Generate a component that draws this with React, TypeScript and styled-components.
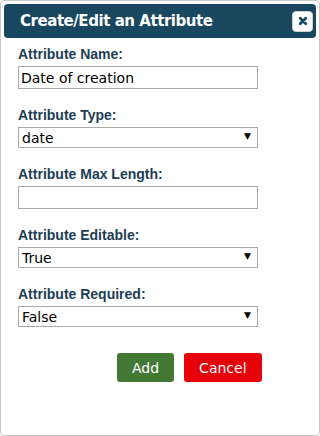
import React from "react";
import styled, { createGlobalStyle } from "styled-components";

const GlobalStyle = createGlobalStyle`
  html, body {
    margin: 0;
    padding: 0;
    background: #ffffff;
  }
`;

const Dialog = styled.div`
  box-sizing: border-box;
  width: 320px;
  height: 436px;
  border: 1px solid #c9c9c9;
  border-radius: 4px;
  padding: 3px;
  background: #ffffff;
  font-family: "DejaVu Sans", Verdana, sans-serif;
`;

const Header = styled.div`
  display: flex;
  align-items: center;
  justify-content: space-between;
  height: 34px;
  padding: 0 3px 0 16px;
  background: #19475f;
  border-radius: 4px;
  color: #ffffff;
`;

const Title = styled.h1`
  margin: 0;
  font-size: 15px;
  font-weight: bold;
  letter-spacing: -0.45px;
`;

const CloseButton = styled.button`
  display: flex;
  align-items: center;
  justify-content: center;
  width: 21px;
  height: 21px;
  padding: 0;
  border: 1px solid #d0d0d0;
  border-radius: 4px;
  background: #ffffff;
`;

const Form = styled.form`
  display: flex;
  flex-direction: column;
  padding: 8px 0 0 14px;
`;

const Field = styled.div`
  display: flex;
  flex-direction: column;
  gap: 3px;
  margin-bottom: 18px;
`;

const Label = styled.label`
  font-family: "Liberation Sans", Arial, sans-serif;
  font-size: 14px;
  font-weight: bold;
  line-height: 17px;
  color: #203d54;
`;

const TextInput = styled.input`
  box-sizing: border-box;
  width: 240px;
  height: 23px;
  padding: 0 2px;
  border: 1px solid #a9a9a9;
  font-family: "DejaVu Sans", Verdana, sans-serif;
  font-size: 14px;
  color: #000;
  outline: none;
`;

const SelectBox = styled.div`
  position: relative;
  width: 240px;
`;

const Select = styled.select`
  box-sizing: border-box;
  width: 240px;
  height: 21px;
  padding: 0 3px;
  border: 1px solid #a9a9a9;
  border-radius: 0;
  background: #ffffff;
  appearance: none;
  font-family: "DejaVu Sans", Verdana, sans-serif;
  font-size: 14px;
  color: #000;
`;

const Arrow = styled.span`
  position: absolute;
  right: 7px;
  top: 5px;
  font-size: 9px;
  line-height: 1;
  color: #000;
  pointer-events: none;
`;

const Actions = styled.div`
  display: flex;
  gap: 10px;
  margin-top: 8px;
  padding-left: 99px;
`;

const Button = styled.button<{ $tone: "add" | "cancel" }>`
  height: 29px;
  padding: 0 15px;
  border: none;
  border-radius: 3px;
  background: ${(p) => (p.$tone === "add" ? "#447835" : "#e6000a")};
  color: #ffffff;
  font-family: "DejaVu Sans", Verdana, sans-serif;
  font-size: 14px;
`;

function Dropdown({ value, options }: { value: string; options: string[] }) {
  return (
    <SelectBox>
      <Select defaultValue={value}>
        {options.map((o) => (
          <option key={o}>{o}</option>
        ))}
      </Select>
      <Arrow>▼</Arrow>
    </SelectBox>
  );
}

export default function App() {
  return (
    <>
      <GlobalStyle />
      <Dialog>
        <Header>
          <Title>Create/Edit an Attribute</Title>
          <CloseButton aria-label="close">
            <svg width="10" height="10" viewBox="0 0 10 10">
              <path d="M2.2 2.2 L7.8 7.8 M7.8 2.2 L2.2 7.8" stroke="#19475f" strokeWidth="2.8" strokeLinecap="round" />
            </svg>
          </CloseButton>
        </Header>
        <Form>
          <Field>
            <Label>Attribute Name:</Label>
            <TextInput defaultValue="Date of creation" />
          </Field>
          <Field>
            <Label>Attribute Type:</Label>
            <Dropdown value="date" options={["date", "string", "number"]} />
          </Field>
          <Field>
            <Label>Attribute Max Length:</Label>
            <TextInput defaultValue="" />
          </Field>
          <Field>
            <Label>Attribute Editable:</Label>
            <Dropdown value="True" options={["True", "False"]} />
          </Field>
          <Field>
            <Label>Attribute Required:</Label>
            <Dropdown value="False" options={["True", "False"]} />
          </Field>
          <Actions>
            <Button type="button" $tone="add">Add</Button>
            <Button type="button" $tone="cancel">Cancel</Button>
          </Actions>
        </Form>
      </Dialog>
    </>
  );
}
